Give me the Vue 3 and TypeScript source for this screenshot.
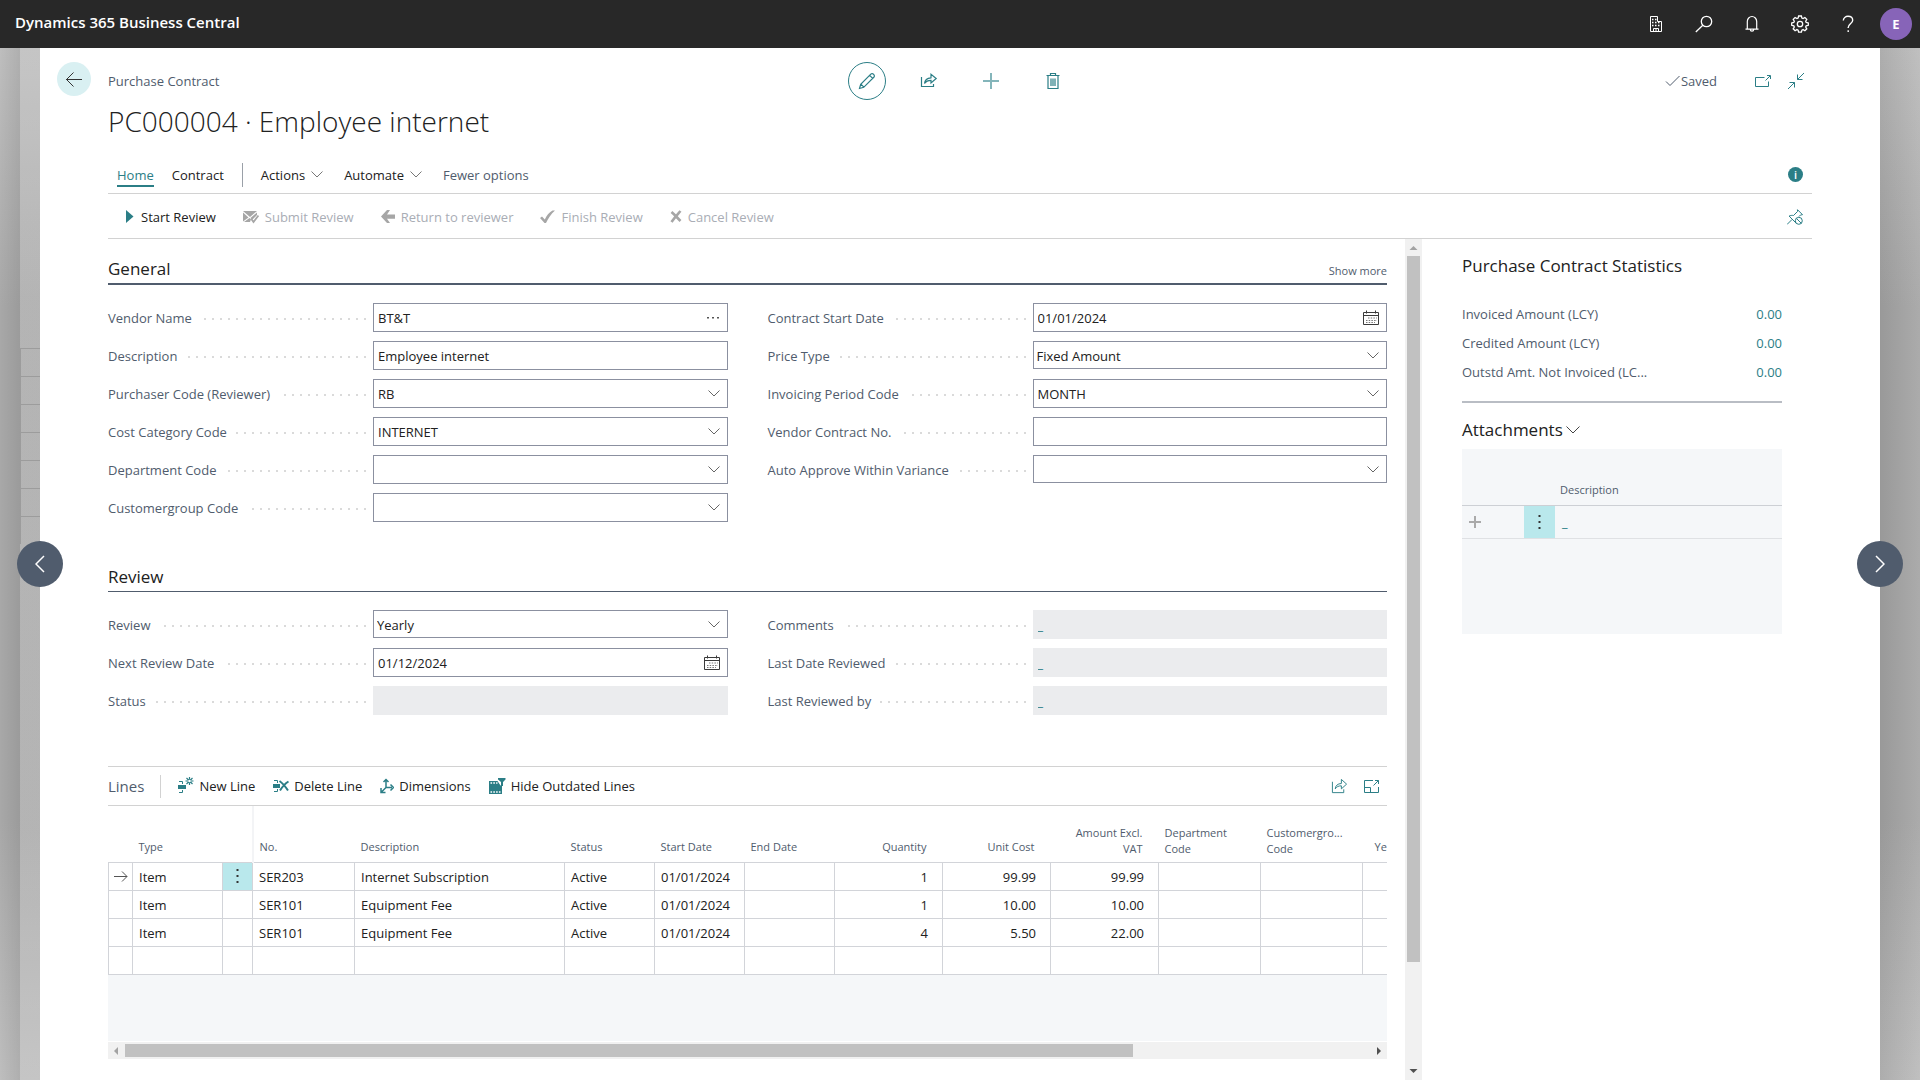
<script setup lang="ts">
type Kind = 'text' | 'more' | 'lookup' | 'select' | 'date' | 'readonly'

interface Field {
  id: string
  label: string
  kind: Kind
  value: string
}

interface Section {
  title: string
  more: boolean
  columns: Field[][]
}

interface Line {
  type: string
  no: string
  description: string
  status: string
  start: string
  quantity: string
  cost: string
  amount: string
}

const sections: Section[] = [
  {
    title: 'General',
    more: true,
    columns: [
      [
        { id: 'vendor-name', label: 'Vendor Name', kind: 'more', value: 'BT&T' },
        { id: 'description', label: 'Description', kind: 'text', value: 'Employee internet' },
        { id: 'purchaser', label: 'Purchaser Code (Reviewer)', kind: 'lookup', value: 'RB' },
        { id: 'cost-category', label: 'Cost Category Code', kind: 'lookup', value: 'INTERNET' },
        { id: 'department', label: 'Department Code', kind: 'lookup', value: '' },
        { id: 'customergroup', label: 'Customergroup Code', kind: 'lookup', value: '' },
      ],
      [
        { id: 'start-date', label: 'Contract Start Date', kind: 'date', value: '01/01/2024' },
        { id: 'price-type', label: 'Price Type', kind: 'select', value: 'Fixed Amount' },
        { id: 'period', label: 'Invoicing Period Code', kind: 'lookup', value: 'MONTH' },
        { id: 'contract-no', label: 'Vendor Contract No.', kind: 'text', value: '' },
        { id: 'auto-approve', label: 'Auto Approve Within Variance', kind: 'select', value: '' },
      ],
    ],
  },
  {
    title: 'Review',
    more: false,
    columns: [
      [
        { id: 'review', label: 'Review', kind: 'select', value: 'Yearly' },
        { id: 'next-review', label: 'Next Review Date', kind: 'date', value: '01/12/2024' },
        { id: 'status', label: 'Status', kind: 'readonly', value: '' },
      ],
      [
        { id: 'comments', label: 'Comments', kind: 'readonly', value: '_' },
        { id: 'last-date', label: 'Last Date Reviewed', kind: 'readonly', value: '_' },
        { id: 'last-by', label: 'Last Reviewed by', kind: 'readonly', value: '_' },
      ],
    ],
  },
]

const lines: Line[] = [
  { type: 'Item', no: 'SER203', description: 'Internet Subscription', status: 'Active', start: '01/01/2024', quantity: '1', cost: '99.99', amount: '99.99' },
  { type: 'Item', no: 'SER101', description: 'Equipment Fee', status: 'Active', start: '01/01/2024', quantity: '1', cost: '10.00', amount: '10.00' },
  { type: 'Item', no: 'SER101', description: 'Equipment Fee', status: 'Active', start: '01/01/2024', quantity: '4', cost: '5.50', amount: '22.00' },
  { type: '', no: '', description: '', status: '', start: '', quantity: '', cost: '', amount: '' },
]

const columnWidths: number[] = [24, 90, 30, 102, 210, 90, 90, 90, 108, 108, 108, 102, 102, 120]

const statistics: { label: string; value: string }[] = [
  { label: 'Invoiced Amount (LCY)', value: '0.00' },
  { label: 'Credited Amount (LCY)', value: '0.00' },
  { label: 'Outstd Amt. Not Invoiced (LC...', value: '0.00' },
]
</script>

<template>
  <div class="app">
    <header class="topbar">
      <span class="product">Dynamics 365 Business Central</span>
      <nav class="topicons">
        <button aria-label="Environment">
          <svg width="18" height="18" viewBox="0 0 18 18" fill="none" stroke="#fff">
            <path d="M3.5 16.5v-15h7v5h4v10z" />
            <path d="M6.500 16.500v-3h5v3M9 14v2.500" />
            <path d="M5 4.500h5M5 7.500h8M5 10.500h8" stroke-dasharray="1.500 1.500" stroke-width="1.500" />
          </svg>
        </button>
        <button aria-label="Search">
          <svg width="18" height="18" viewBox="0 0 18 18" fill="none" stroke="#fff" stroke-width="1.300">
            <circle cx="11.500" cy="6.500" r="5.200" />
            <path d="M7.800 10.200L.800 17" />
          </svg>
        </button>
        <button aria-label="Notifications">
          <svg width="18" height="18" viewBox="0 0 18 18" fill="none" stroke="#fff" stroke-width="1.200">
            <path d="M4.300 14V6.500a4.700 5 0 0 1 9.400 0V14M2.500 14.200h13M7.300 14.500a1.700 1.700 0 0 0 3.400 0" />
          </svg>
        </button>
        <button aria-label="Settings">
          <svg width="18" height="18" viewBox="0 0 18 18" fill="none" stroke="#fff" stroke-width="1.300">
            <path d="M7.600 1h2.800l.5 2.100 1.200.5 1.800-1.100 1.900 1.900-1.100 1.800.5 1.200 2.100.5v2.400l-2.100.5-.5 1.200 1.100 1.800-1.900 1.900-1.800-1.100-1.200.5-.5 2.100H7.600l-.5-2.100-1.200-.5-1.800 1.100-1.900-1.900 1.100-1.800-.5-1.200-2.100-.5V7.900l2.100-.5.5-1.200-1.100-1.800 1.900-1.900 1.800 1.100 1.200-.5z" />
            <circle cx="9" cy="9" r="2.700" />
          </svg>
        </button>
        <button aria-label="Help">
          <svg width="18" height="18" viewBox="0 0 18 18" fill="none" stroke="#fff" stroke-width="1.400">
            <path d="M4.300 5.500A4.700 4.700 0 0 1 9 1.200c2.700 0 4.700 1.600 4.700 4 0 3.300-4.500 4-4.500 7.300v.5M9.200 15.200V17" />
          </svg>
        </button>
        <button class="avatar" aria-label="Account">E</button>
      </nav>
    </header>

    <div class="stage">
      <div class="behind">
        <div class="ghost-rows"><i v-for="n in 7" :key="n"></i></div>
      </div>

      <main class="panel">
        <div class="gutter">
          <button class="back" aria-label="Back">
            <svg width="16" height="16" viewBox="0 0 16 16" fill="none" stroke="#333">
              <path d="M0 8.500h16M7.500 1.500l-7 7 7 7" />
            </svg>
          </button>
        </div>

        <div class="content">
          <div class="titlebar">
            <span class="crumb">Purchase Contract</span>
            <div class="commands">
              <button class="edit" aria-label="Edit">
                <svg width="18" height="18" viewBox="0 0 18 18" fill="none" stroke="#2b7e86" stroke-width="1.200">
                  <path d="M1.500 16.500l1.200-4.200L12.800 2.200a1.800 1.800 0 0 1 2.600 0l.4.400a1.800 1.800 0 0 1 0 2.600L5.700 15.300zM2.900 12.200l3 3M11.700 3.300l3 3" />
                </svg>
              </button>
              <button aria-label="Share">
                <svg width="18" height="18" viewBox="0 0 18 18" fill="none" stroke="#2b7e86" stroke-width="1.200">
                  <path d="M1.500 5v9.500h12V12M4.500 11.500c.3-3.500 2.500-5.500 6.500-5.700V2.200l5.200 4.300-5.200 4.500V8.300c-3 0-5 .8-6.500 3.200z" />
                </svg>
              </button>
              <button aria-label="New">
                <svg width="18" height="18" viewBox="0 0 18 18" fill="none" stroke="#84b5ba" stroke-width="2">
                  <path d="M1 9h16M9 1v16" />
                </svg>
              </button>
              <button aria-label="Delete">
                <svg width="18" height="18" viewBox="0 0 18 18" fill="none" stroke="#2b7e86" stroke-width="1.200">
                  <path d="M2.500 3.500h13M6.500 3V1.500h5V3M4 4v12.500h10V4M7 6.500v7.500M9 6.500v7.500M11 6.500v7.500" />
                </svg>
              </button>
            </div>
            <div class="state">
              <svg class="tick" width="16" height="14" viewBox="0 0 16 14" fill="none" stroke="#505c6d"><path d="M1 7.500l4 4L14.500 2" /></svg>
              <span class="saved">Saved</span>
              <button class="popout" aria-label="Open in new window">
                <svg width="16" height="14" viewBox="0 0 16 14" fill="none" stroke="#2b7e86">
                  <path d="M9.500 3.500h-9v9h13V7.500M10.500 6.500l4.500-4.500M12 1.500h3.500V5" />
                </svg>
              </button>
              <button aria-label="Collapse">
                <svg width="16" height="16" viewBox="0 0 16 16" fill="none" stroke="#2b7e86">
                  <path d="M0 16l6.500-6.500M1.500 9.500h5v5M16 0L9.500 6.500M9.500 1.500v5h5" />
                </svg>
              </button>
            </div>
          </div>
          <h1>PC000004 · Employee internet</h1>

          <nav class="tabs">
            <a href="#" class="tab active">Home</a>
            <a href="#" class="tab">Contract</a>
            <span class="rule"></span>
            <button class="tab">Actions
              <svg width="12" height="7" viewBox="0 0 12 7" fill="none" stroke="#777"><path d="M.5 .5L6 6l5.500-5.500" /></svg>
            </button>
            <button class="tab">Automate
              <svg width="12" height="7" viewBox="0 0 12 7" fill="none" stroke="#777"><path d="M.5 .5L6 6l5.500-5.500" /></svg>
            </button>
            <button class="tab fewer">Fewer options</button>
            <button class="info" aria-label="Details">i</button>
          </nav>

          <div class="actions">
            <button>
              <svg width="10" height="14" viewBox="0 0 10 14"><path d="M1 0l7.500 6.500L1 13z" fill="#2b7e86" /></svg>
              Start Review
            </button>
            <button disabled>
              <svg width="16" height="14" viewBox="0 0 16 14">
                <path d="M0 1h14L7 7z M0 2.500l5.500 5L0 11.500z M14 2.500V5l-4.500 4.500L7.500 8z M1 12l5.500-4 1.500 1.500L7 12z" fill="#a6a6a6" />
                <path d="M8 8.500l2.500 3.500L15.500 5.500" fill="none" stroke="#a6a6a6" stroke-width="1.800" />
              </svg>
              Submit Review
            </button>
            <button disabled>
              <svg width="14" height="14" viewBox="0 0 14 14"><path d="M0 6.500L6 0h3L6 4.500h8v4.200H6L9 13H6z" fill="#a6a6a6" /></svg>
              Return to reviewer
            </button>
            <button disabled>
              <svg width="15" height="14" viewBox="0 0 15 14"><path d="M0 8l2-1.500L4.800 9.500C6.500 5.500 9 2.500 12.500 .5H15C11 4 8 8.500 6 13H4.500z" fill="#a6a6a6" /></svg>
              Finish Review
            </button>
            <button disabled>
              <svg width="12" height="14" viewBox="0 0 12 14"><path d="M1.500 2c3.500 3 6 6 9 9M10.500 1C7.500 4.500 4.500 7.500 1.500 12" fill="none" stroke="#a6a6a6" stroke-width="2.600" /></svg>
              Cancel Review
            </button>
            <button class="unpin" aria-label="Unpin">
              <svg width="16" height="16" viewBox="0 0 16 16" fill="none" stroke="#2b7e86">
                <path d="M0 15.500l5-5M2 7l7 7M2 7.200c1.500-.8 3-1 4.500-.7L10.500 2.500V.7l5 5-2 .3-1.500 1.500" />
                <circle cx="11.800" cy="11.800" r="3.500" />
                <path d="M9.500 9.500l4.700 4.700" />
              </svg>
            </button>
          </div>

          <div class="body">
            <div class="form">
              <section v-for="s in sections" :key="s.title" class="fasttab">
                <div class="head" :class="{ strong: s.more }">
                  <h2>{{ s.title }}</h2>
                  <button v-if="s.more">Show more</button>
                </div>
                <div class="columns">
                  <div v-for="(col, c) in s.columns" :key="c" class="column">
                    <div v-for="f in col" :key="f.id" class="field">
                      <div class="caption"><label :for="f.id">{{ f.label }}</label></div>
                      <div class="control" :class="f.kind">
                        <select v-if="f.kind === 'select'" :id="f.id">
                          <option>{{ f.value }}</option>
                        </select>
                        <input v-else :id="f.id" type="text" :value="f.value" :readonly="f.kind === 'readonly'" />
                        <svg v-if="f.kind === 'select'" class="glyph" width="12" height="7" viewBox="0 0 12 7" fill="none" stroke="#666"><path d="M.5 .5L6 6l5.500-5.500" /></svg>
                        <button v-if="f.kind === 'lookup'" class="glyph" :aria-label="'Look up ' + f.label">
                          <svg width="12" height="7" viewBox="0 0 12 7" fill="none" stroke="#666"><path d="M.5 .5L6 6l5.500-5.500" /></svg>
                        </button>
                        <button v-if="f.kind === 'more'" class="glyph" :aria-label="'Look up ' + f.label">
                          <svg width="14" height="3" viewBox="0 0 14 3" fill="#555"><path d="M1 1h2v1.500H1zM6 1h2v1.500H6zM11 1h2v1.500h-2z" /></svg>
                        </button>
                        <button v-if="f.kind === 'date'" class="glyph" :aria-label="'Choose ' + f.label">
                          <svg width="16" height="16" viewBox="0 0 16 16" fill="none" stroke="#3b3b3b">
                            <path d="M.5 2.500h15v12H.5zM.5 5.500h15M3.500 .5v3M12.500 .5v3" />
                            <path d="M5 8h9M3 10.500h11M3 12.500h9" stroke="#777" stroke-dasharray="1.500 1.200" />
                          </svg>
                        </button>
                      </div>
                    </div>
                  </div>
                </div>
              </section>

              <section class="lines">
                <div class="linebar">
                  <h3>Lines</h3>
                  <span class="rule"></span>
                  <button>
                    <svg width="16" height="18" viewBox="0 0 16 18" fill="none" stroke="#2b7e86">
                      <path d="M1 4.500h3.500V7M1 15.500h3.500V13" />
                      <path d="M0 8h8v4H0z" fill="#2b7e86" stroke="none" />
                      <path d="M11.500 0v8M7.500 4h8M8.500 1l6 6M14.500 1l-6 6" stroke-width="1.200" />
                      <circle cx="11.500" cy="4" r="1.300" fill="#fff" stroke="none" />
                    </svg>
                    New Line
                  </button>
                  <button>
                    <svg width="16" height="18" viewBox="0 0 16 18" fill="none" stroke="#2b7e86">
                      <path d="M1 3.500h3.500V6M1 14.500h3.500V12" />
                      <path d="M0 7h7v4H0z" fill="#2b7e86" stroke="none" />
                      <path d="M6.500 4c3 2 5.500 5 8.500 9.500M15.500 4.500c-3.500 2-6 5-8.500 9" stroke-width="2" />
                    </svg>
                    Delete Line
                  </button>
                  <button>
                    <svg width="14" height="18" viewBox="0 0 14 18" fill="none" stroke="#2b7e86" stroke-width="1.500">
                      <path d="M6 3v7.500M6 10.500h6M6 10.500l-4.500 4.500M3.500 5L6 2.500 8.500 5M10.500 7.500l3 3-3 3M1 11v4.500h4.500" />
                    </svg>
                    Dimensions
                  </button>
                  <button>
                    <svg width="17" height="18" viewBox="0 0 17 18">
                      <path d="M0 4h8.500l3 4.500H13V17H0z" fill="#2b7e86" />
                      <path d="M9 1h7.500v1.500L14 5v4h-2V5L9 2.500z" fill="#2b7e86" />
                      <path d="M1.500 6h7M1.500 15h11" stroke="#fff" stroke-width="1.600" stroke-dasharray="1.600 1.200" />
                    </svg>
                    Hide Outdated Lines
                  </button>
                  <div class="tools">
                    <button aria-label="Share lines">
                      <svg width="17" height="17" viewBox="0 0 18 18" fill="none" stroke="#2b7e86">
                        <path d="M1.500 4v11.500h12V12M4.500 11.500c.3-3.500 2.500-5.500 6.500-5.700V1.500l5.500 5-5.500 5V8.300c-3 0-5 .8-6.500 3.200z" />
                      </svg>
                    </button>
                    <button aria-label="Expand lines">
                      <svg width="15" height="13" viewBox="0 0 15 13" fill="none" stroke="#2b7e86">
                        <path d="M9 .5H.5v12h14V7M.5 7.500h6v5M9.500 5.500l5-5M11 .5h3.500V4" />
                      </svg>
                    </button>
                  </div>
                </div>

                <div class="grid">
                  <table>
                    <colgroup>
                      <col v-for="(w, i) in columnWidths" :key="i" :style="{ width: w + 'px' }" />
                    </colgroup>
                    <thead>
                      <tr>
                        <th></th>
                        <th>Type</th>
                        <th class="frozen"></th>
                        <th>No.</th>
                        <th>Description</th>
                        <th>Status</th>
                        <th>Start Date</th>
                        <th>End Date</th>
                        <th class="num">Quantity</th>
                        <th class="num">Unit Cost</th>
                        <th class="num double">Amount Excl.<br />VAT</th>
                        <th class="double">Department<br />Code</th>
                        <th class="double">Customergro...<br />Code</th>
                        <th class="cut">Ye</th>
                      </tr>
                    </thead>
                    <tbody>
                      <tr v-for="(l, i) in lines" :key="i">
                        <td class="mark">
                          <svg v-if="i === 0" width="14" height="11" viewBox="0 0 14 11" fill="none" stroke="#555"><path d="M0 5.500h13M8 .5l5 5-5 5" /></svg>
                        </td>
                        <td>{{ l.type }}</td>
                        <td class="mark" :class="{ menu: i === 0 }">
                          <svg v-if="i === 0" width="3" height="14" viewBox="0 0 3 14" fill="#333"><path d="M.5 0h2v2h-2zM.5 6h2v2h-2zM.5 12h2v2h-2z" /></svg>
                        </td>
                        <td>{{ l.no }}</td>
                        <td>{{ l.description }}</td>
                        <td>{{ l.status }}</td>
                        <td>{{ l.start }}</td>
                        <td></td>
                        <td class="num">{{ l.quantity }}</td>
                        <td class="num">{{ l.cost }}</td>
                        <td class="num">{{ l.amount }}</td>
                        <td></td>
                        <td></td>
                        <td></td>
                      </tr>
                    </tbody>
                  </table>
                </div>
                <div class="hscroll">
                  <svg width="17" height="17" viewBox="0 0 17 17"><path d="M10 5v8L6 9z" fill="#a3a3a3" /></svg>
                  <div class="track"><div class="thumb"></div></div>
                  <svg width="17" height="17" viewBox="0 0 17 17"><path d="M7 5v8l4-4z" fill="#505050" /></svg>
                </div>
              </section>
            </div>

            <div class="vscroll">
              <svg width="17" height="17" viewBox="0 0 17 17"><path d="M4.500 11h8l-4-4z" fill="#a3a3a3" /></svg>
              <div class="track"><div class="thumb"></div></div>
              <svg width="17" height="17" viewBox="0 0 17 17"><path d="M4.500 6h8l-4 4z" fill="#505050" /></svg>
            </div>

            <aside class="factbox">
              <h3>Purchase Contract Statistics</h3>
              <dl>
                <div v-for="s in statistics" :key="s.label">
                  <dt>{{ s.label }}</dt>
                  <dd><a href="#">{{ s.value }}</a></dd>
                </div>
              </dl>
              <h3 class="attach">Attachments
                <svg width="14" height="8" viewBox="0 0 14 8" fill="none" stroke="#444"><path d="M.5 .5L7 7 13.500 .5" /></svg>
              </h3>
              <div class="attachments">
                <table>
                  <thead>
                    <tr><th></th><th></th><th>Description</th></tr>
                  </thead>
                  <tbody>
                    <tr>
                      <td class="add">
                        <svg width="12" height="12" viewBox="0 0 12 12" stroke="#aaa" stroke-width="2"><path d="M0 6h12M6 0v12" /></svg>
                      </td>
                      <td class="menu">
                        <svg width="3" height="14" viewBox="0 0 3 14" fill="#333"><path d="M.5 0h2v2h-2zM.5 6h2v2h-2zM.5 12h2v2h-2z" /></svg>
                      </td>
                      <td><a href="#">_</a></td>
                    </tr>
                  </tbody>
                </table>
              </div>
            </aside>
          </div>
        </div>
      </main>

      <div class="behind right"></div>

      <button class="pager prev" aria-label="Previous record">
        <svg width="10" height="18" viewBox="0 0 10 18" fill="none" stroke="#fff" stroke-width="1.500"><path d="M9 1L1 9l8 8" /></svg>
      </button>
      <button class="pager next" aria-label="Next record">
        <svg width="10" height="18" viewBox="0 0 10 18" fill="none" stroke="#fff" stroke-width="1.500"><path d="M1 1l8 8-8 8" /></svg>
      </button>
    </div>
  </div>
</template>

<style>
body {
  background: #fff;
}
</style>

<style scoped>
.app {
  display: flex;
  flex-direction: column;
  min-height: 100vh;
  font-family: 'Open Sans', 'Noto Sans', sans-serif;
  font-size: 13px;
  line-height: 20px;
  color: #212121;
}

.app * {
  box-sizing: border-box;
}

svg {
  display: block;
  flex: none;
}

button {
  display: flex;
  align-items: center;
  justify-content: center;
  padding: 0;
  border: 0;
  background: none;
  font: inherit;
  color: inherit;
  white-space: nowrap;
}

a {
  color: inherit;
  text-decoration: none;
}

h1,
h2,
h3,
dl,
dd {
  margin: 0;
}

.topbar {
  display: flex;
  align-items: center;
  justify-content: space-between;
  height: 48px;
  padding: 0 8px 0 15px;
  background: #282828;
  color: #fff;
}

.product {
  padding-bottom: 4px;
  font-size: 15px;
  font-weight: 600;
}

.topicons {
  display: flex;
  align-items: center;
}

.topicons button {
  width: 48px;
  height: 48px;
}

.topicons .avatar {
  width: 32px;
  height: 32px;
  margin-left: 8px;
  border-radius: 50%;
  background: #8764b8;
  font-size: 13px;
  font-weight: 700;
}

.stage {
  position: relative;
  display: flex;
  flex: 1;
}

.behind {
  display: flex;
  justify-content: flex-end;
  width: 40px;
  background:
    linear-gradient(to right, transparent 20px, rgba(255, 255, 255, 0.2) 20px),
    linear-gradient(to right, rgba(0, 0, 0, 0), rgba(0, 0, 0, 0.08) 20px, rgba(0, 0, 0, 0.04) 20px, rgba(0, 0, 0, 0.04)),
    linear-gradient(#bebebe, #a8a8a8 25%, #a8a8a8 75%, #bebebe);
}

.behind.right {
  background:
    linear-gradient(to left, rgba(255, 255, 255, 0.06), rgba(0, 0, 0, 0.08)),
    linear-gradient(#bcbcbc, #a6a6a6 25%, #a6a6a6 75%, #bcbcbc);
}

.ghost-rows {
  width: 20px;
  margin-top: 300px;
}

.ghost-rows i {
  display: block;
  height: 28px;
  border-top: 1px solid #9c9c9c;
  border-left: 1px solid #9c9c9c;
}

.panel {
  display: flex;
  flex: 1;
  min-width: 0;
  padding-right: 68px;
  background: #fff;
}

.gutter {
  width: 68px;
  padding: 14px 17px 0;
}

.back {
  width: 34px;
  height: 34px;
  border-radius: 50%;
  background: #d9f0f2;
}

.content {
  display: flex;
  flex-direction: column;
  flex: 1;
  min-width: 0;
}

.titlebar {
  display: grid;
  grid-template-columns: 1fr auto 1fr;
  align-items: center;
  height: 38px;
  margin-top: 14px;
}

.crumb,
.saved,
.fewer {
  color: #505c6d;
}

.commands {
  display: flex;
  gap: 24px;
}

.commands button {
  width: 38px;
  height: 38px;
}

.commands .edit {
  border: 1px solid #2b7e86;
  border-radius: 50%;
}

.state {
  display: flex;
  align-items: center;
  justify-content: flex-end;
  padding-right: 8px;
}

.popout {
  margin: 0 17px 0 38px;
}

h1 {
  font-size: 28px;
  font-weight: 300;
  line-height: 42px;
}

.tabs {
  display: flex;
  align-items: center;
  height: 52px;
  padding: 14px 9px 0;
  border-bottom: 1px solid #d2d2d2;
}

.tab {
  gap: 6px;
  margin-right: 21px;
}

a.tab {
  margin-right: 18px;
  border-bottom: 2px solid transparent;
  border-top: 2px solid transparent;
}

a.tab.active {
  color: #2b7e86;
  border-bottom-color: #2b7e86;
}

.tabs .rule {
  height: 24px;
  margin-right: 18px;
  border-left: 1px solid #9aa0a8;
}

.info {
  width: 15px;
  height: 15px;
  margin-left: auto;
  border-radius: 50%;
  background: #2b7e86;
  color: #fff;
  font-size: 11px;
  font-weight: 600;
  line-height: 15px;
}

.actions {
  display: flex;
  align-items: center;
  gap: 27px;
  height: 45px;
  padding: 2px 9px 0 17px;
  border-bottom: 1px solid #d2d2d2;
}

.actions button {
  gap: 6px;
}

.actions button:disabled {
  color: #a9adb5;
}

.actions .unpin {
  margin-left: auto;
}

.body {
  display: flex;
  flex: 1;
}

.form {
  flex: 1;
  min-width: 0;
  margin-right: 18px;
  padding-bottom: 21px;
}

.head {
  display: flex;
  align-items: center;
  justify-content: space-between;
  padding-bottom: 2px;
  border-bottom: 1px solid #505c6d;
}

.head.strong {
  border-bottom-width: 2px;
}

.head h2 {
  font-size: 17px;
  font-weight: 500;
  line-height: 24px;
}

.head button {
  padding-top: 4px;
  font-size: 11px;
  color: #505c6d;
}

.fasttab {
  padding-top: 18px;
}

.fasttab + .fasttab {
  padding-top: 43px;
}

.columns {
  display: grid;
  grid-template-columns: 1fr 1fr;
  gap: 40px;
  padding-top: 18px;
}

.column {
  display: flex;
  flex-direction: column;
  gap: 9px;
}

.field {
  display: grid;
  grid-template-columns: 265px 1fr;
  height: 29px;
}

.caption {
  display: flex;
  align-items: center;
  margin-right: 7px;
  background: linear-gradient(to right, transparent 6px, #dadada 6px) right 15px / 8px 2px repeat-x;
}

.caption label {
  padding-right: 8px;
  background: #fff;
  color: #505c6d;
}

.control {
  position: relative;
}

.control input,
.control select {
  display: block;
  width: 100%;
  height: 29px;
  padding: 0 24px 0 4px;
  border: 1px solid #8b90a0;
  border-radius: 0;
  background: #fff;
  font: inherit;
  color: #212121;
  appearance: none;
  outline: 0;
}

.control select {
  height: 28px;
  padding: 1px 24px 0 3px;
}

.control.readonly input {
  padding-left: 5px;
  border: 0;
  background: #ebecee;
  font-weight: 600;
  color: #2b7e86;
}

.glyph {
  position: absolute;
  top: 0;
  right: 8px;
  height: 29px;
  pointer-events: none;
}

.lines {
  margin-top: 51px;
}

.linebar {
  display: flex;
  align-items: center;
  height: 40px;
  border-top: 1px solid #d2d2d2;
  border-bottom: 1px solid #d2d2d2;
}

.linebar h3 {
  font-size: 15px;
  font-weight: 500;
  color: #505c6d;
}

.linebar .rule {
  height: 23px;
  margin: 0 17px 0 16px;
  border-left: 1px solid #d2d2d2;
}

.linebar button {
  gap: 5px;
  margin-right: 18px;
}

.tools {
  display: flex;
  align-items: center;
  margin-left: auto;
}

.linebar .tools button {
  margin-right: 0;
}

.linebar .tools button + button {
  margin: 0 8px 0 16px;
}

.grid {
  height: 235px;
  overflow: hidden;
  background: #f5f7f9;
}

table {
  border-collapse: collapse;
  table-layout: fixed;
}

.grid table {
  width: 1374px;
  background: #fff;
}

.grid th {
  height: 56px;
  padding: 0 6px 7px;
  vertical-align: bottom;
  text-align: left;
  font-size: 11px;
  font-weight: 400;
  line-height: 16px;
  color: #505c6d;
  white-space: nowrap;
}

.grid th.double {
  padding-bottom: 5px;
}

.grid th.frozen {
  border-right: 2px solid #f3f4f6;
}

.grid th.num {
  padding-right: 16px;
  text-align: right;
}

.grid th.cut {
  padding-left: 12px;
}

.grid td {
  height: 28px;
  padding: 1px 6px 0;
  border: 1px solid #d2d4d9;
  line-height: 20px;
}

.grid td.num {
  padding-right: 14px;
  text-align: right;
}

.grid td.mark {
  padding: 0;
}

.mark svg,
.menu svg {
  margin: 0 auto;
}

.menu {
  background: #b9e8ec;
}

.hscroll {
  display: flex;
  height: 17px;
  margin-top: 1px;
  background: #f1f1f1;
}

.track {
  flex: 1;
}

.hscroll .thumb {
  width: 81%;
  height: 13px;
  margin-top: 2px;
  background: #c1c1c1;
}

.vscroll {
  display: flex;
  flex-direction: column;
  width: 17px;
  background: #f1f1f1;
}

.vscroll .thumb {
  width: 13px;
  height: 87.5%;
  margin: 0 auto;
  background: #c1c1c1;
}

.factbox {
  width: 320px;
  margin: 0 30px 0 40px;
  padding-top: 15px;
}

.factbox h3 {
  font-size: 17px;
  font-weight: 500;
  line-height: 24px;
}

.factbox dl {
  margin-top: 22px;
  padding-bottom: 14px;
  border-bottom: 2px solid #b9bdc4;
}

.factbox dl div {
  display: flex;
  justify-content: space-between;
  line-height: 29px;
}

.factbox dt {
  color: #505c6d;
}

.factbox dd a,
.attachments a {
  color: #2b7e86;
}

.factbox h3.attach {
  display: flex;
  align-items: center;
  gap: 3px;
  margin-top: 15px;
}

.attachments {
  height: 185px;
  margin-top: 7px;
  background: #f5f7f9;
}

.attachments table {
  width: 100%;
}

.attachments th {
  width: 62px;
  height: 56px;
  padding: 0 0 5px;
  vertical-align: bottom;
  text-align: left;
  font-size: 11px;
  font-weight: 400;
  color: #505c6d;
}

.attachments th:nth-child(2) {
  width: 31px;
}

.attachments th:nth-child(3) {
  width: auto;
  padding-left: 5px;
}

.attachments td {
  height: 33px;
  padding: 0 0 0 7px;
  border-top: 1px solid #cdd0d5;
  border-bottom: 1px solid #dfe1e4;
}

.attachments td a {
  font-weight: 600;
}

.attachments td.menu {
  padding: 0;
}

.pager {
  position: absolute;
  top: 493px;
  width: 46px;
  height: 46px;
  border-radius: 50%;
  background: #505c6d;
}

.prev {
  left: 17px;
}

.next {
  right: 17px;
}
</style>
